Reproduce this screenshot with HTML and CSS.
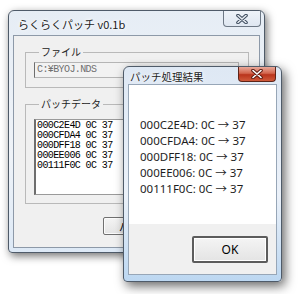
FILE: index.html
```html
<!DOCTYPE html>
<html lang="ja">
<head>
  <meta charset="UTF-8" />
  <title>らくらくパッチ v0.1b</title>
  <link rel="stylesheet" href="styles.css">
</head>
<body>
  <!-- メインウィンドウ -->
  <div class="win main-win">
    <div class="titlebar">
      <span class="title">らくらくパッチ v0.1b</span>
      <span class="close close-inactive">
        <svg width="12" height="10" viewBox="0 0 12 10"><path d="M2 1.5 L10 8.5 M10 1.5 L2 8.5" stroke="#3b4a5c" stroke-width="3.6" stroke-linecap="round"/><path d="M2 1.5 L10 8.5 M10 1.5 L2 8.5" stroke="#e9eef4" stroke-width="1.6" stroke-linecap="round"/></svg>
      </span>
    </div>
    <div class="client">
      <fieldset class="group file-group">
        <legend>ファイル</legend>
        <div class="field">C:¥BYOJ.NDS</div>
      </fieldset>
      <fieldset class="group data-group">
        <legend>パッチデータ</legend>
        <div class="listbox">
          <div>000C2E4D 0C 37</div>
          <div>000CFDA4 0C 37</div>
          <div>000DFF18 0C 37</div>
          <div>000EE006 0C 37</div>
          <div>00111F0C 0C 37</div>
        </div>
      </fieldset>
      <div class="actions">
        <button class="btn">パッチ</button>
      </div>
    </div>
  </div>

  <!-- 結果ダイアログ -->
  <div class="win dialog">
    <div class="titlebar">
      <span class="title">パッチ処理結果</span>
      <span class="close close-active">
        <svg width="12" height="10" viewBox="0 0 12 10"><path d="M2 1.5 L10 8.5 M10 1.5 L2 8.5" stroke="#5a1a10" stroke-width="3.6" stroke-linecap="round"/><path d="M2 1.5 L10 8.5 M10 1.5 L2 8.5" stroke="#fff" stroke-width="1.6" stroke-linecap="round"/></svg>
      </span>
    </div>
    <div class="client dlg-client">
      <div class="msg">
        <div>000C2E4D: 0C → 37</div>
        <div>000CFDA4: 0C → 37</div>
        <div>000DFF18: 0C → 37</div>
        <div>000EE006: 0C → 37</div>
        <div>00111F0C: 0C → 37</div>
      </div>
      <div class="dlg-foot">
        <button class="btn ok">OK</button>
      </div>
    </div>
  </div>
</body>
</html>
```

FILE: styles.css
```css
:root {
  --frame-top: #e6edf5;
  --frame-bottom: #eff3f8;
  --frame-line: #4f5b69;
  --face: #f0f0f0;
  --ui-font: "Noto Sans", "Noto Sans CJK JP", sans-serif;
  --jp-font: "Noto Sans CJK JP", sans-serif;
}

body {
  margin: 0;
  width: 300px;
  height: 294px;
  background: #fff;
  font-family: var(--ui-font);
  color: #000;
  position: relative;
  overflow: hidden;
}

/* ウィンドウ枠 */
.win {
  position: absolute;
  box-sizing: border-box;
  display: flex;
  flex-direction: column;
  border: 1px solid var(--frame-line);
  border-radius: 6px 6px 4px 4px;
  background: linear-gradient(180deg, var(--frame-top), var(--frame-bottom) 60%, #dde9f6);
  box-shadow: 2px 3px 9px rgba(0, 0, 0, 0.55);
}

.main-win {
  left: 8px;
  top: 10px;
  width: 257px;
  height: 243px;
  padding: 0 4px 4px;
}

.dialog {
  left: 123px;
  top: 66px;
  width: 159px;
  height: 216px;
  padding: 0 4px 6px;
  background: linear-gradient(180deg, #dee8f4, #ebf1f9 60%, #bcd7f1);
  box-shadow: 3px 4px 11px rgba(0, 0, 0, 0.6);
}

.titlebar {
  display: flex;
  justify-content: space-between;
  align-items: flex-start;
  flex: none;
}

.main-win .titlebar { height: 24px; }
.dialog .titlebar { height: 17px; }

.title {
  align-self: center;
  font-family: var(--jp-font);
  font-size: 11px;
  line-height: 14px;
  color: #1b1b1b;
  text-shadow: 0 0 6px #fff, 0 0 3px #fff;
}

.main-win .title { padding-left: 5px; margin-top: 1px; }
.dialog .title { padding-left: 2px; margin-top: 3px; font-size: 10.5px; }

/* 閉じるボタン */
.close {
  display: flex;
  align-items: center;
  justify-content: center;
  box-sizing: border-box;
  width: 38px;
  border: 1px solid #6d7885;
  border-top: none;
  border-radius: 0 0 4px 4px;
}

.close-inactive {
  height: 16px;
  margin-right: -1px;
  background: linear-gradient(180deg, #eef3f9, #dfe7f1);
}

.close-active {
  height: 15px;
  margin-right: 1px;
  border-color: #5d2418;
  background: linear-gradient(180deg, #e9a99a 0%, #d2654d 45%, #b9341c 55%, #cf5a3b 100%);
}

/* クライアント領域 */
.client {
  flex: 1;
  display: flex;
  flex-direction: column;
  background: var(--face);
  border: 1px solid #8d99a8;
}

.group {
  margin: 9px 10px 0 11px;
  padding: 0 9px 9px 8px;
  border: 1px solid #b9b9b9;
  min-inline-size: 0;
}

.group legend {
  margin-left: 5px;
  padding: 0 2px;
  font-family: var(--jp-font);
  font-size: 10px;
  line-height: 14px;
  color: #222;
}

.file-group .field {
  margin-top: 3px;
}

.data-group {
  padding-bottom: 8px;
}

.data-group .listbox {
  margin-top: 8px;
}

.field,
.listbox {
  box-sizing: border-box;
  font-family: "Liberation Mono", monospace;
  font-size: 10px;
  letter-spacing: -0.6px;
}

.field {
  height: 16px;
  line-height: 14px;
  padding-left: 2px;
  color: #6f6f6f;
  background: #f2f2f2;
  border: 1px solid #b5b5b5;
  border-left-color: #6e6e6e;
}

.listbox {
  height: 76px;
  padding: 1px 0 0 1px;
  line-height: 10px;
  color: #000;
  background: #fff;
  border: 1px solid #9a9a9a;
  border-left: 2px solid #6e6e6e;
}

.actions {
  display: flex;
  justify-content: center;
  margin-top: 13px;
}

.btn {
  font-family: var(--ui-font);
  font-size: 11px;
  color: #000;
  background: linear-gradient(180deg, #f4f4f4, #e4e4e4);
  border: 1px solid #707070;
  box-shadow: inset 0 0 0 1px #fbfbfb;
  border-radius: 2px;
  padding: 0;
}

.actions .btn {
  width: 66px;
  height: 18px;
  margin-left: -2px;
}

/* ダイアログ内部 */
.dlg-client {
  border-color: #97a6b7;
}

.msg {
  flex: 1;
  background: #fff;
  padding: 32px 0 0 11px;
  font-size: 11.5px;
  line-height: 16px;
  color: #1e1e1e;
}

.dlg-foot {
  display: flex;
  justify-content: flex-end;
  padding: 12px 8px 11px 0;
}

.ok {
  width: 76px;
  height: 27px;
  font-size: 12px;
  border-color: #5c5c5c;
  border-width: 2px;
  box-shadow: inset 0 0 0 1px #fff;
}
```
